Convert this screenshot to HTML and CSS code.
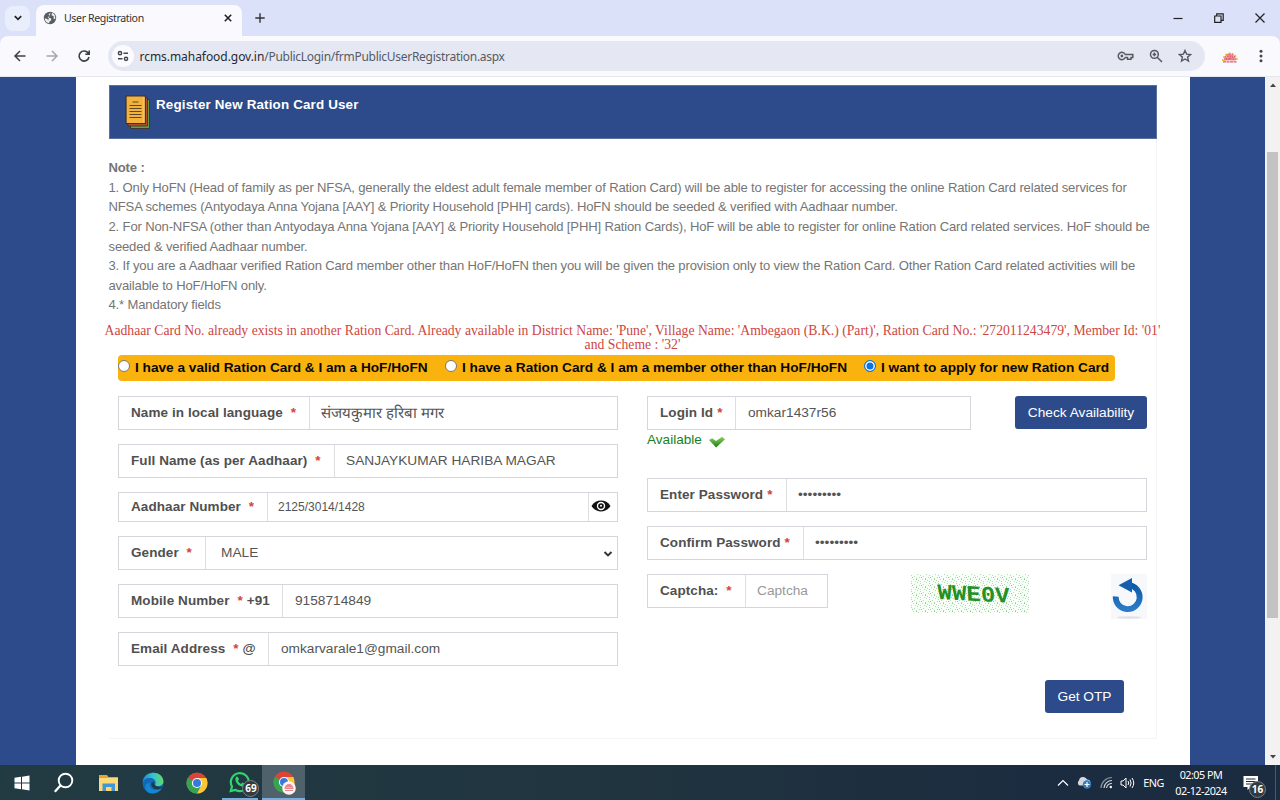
FILE: index.html
```html
<!DOCTYPE html>
<html lang="en">
<head>
<meta charset="utf-8">
<title>User Registration</title>
<link rel="stylesheet" href="styles.css">
</head>
<body>
<div class="tabstrip">
  <div class="tabsearch"><svg width="10" height="10" viewBox="0 0 10 10"><path d="M1.8 3.2 5 6.4 8.200 3.200" fill="none" stroke="#222" stroke-width="1.7"/></svg></div>
  <div class="tab">
    <svg class="globe" width="14" height="14" viewBox="0 0 14 14"><circle cx="7" cy="7" r="6.200" fill="#5a5e63"/><path d="M7.500 1.600 5.600 3.500 6.500 5 4.500 6.500 8 7.300 8.200 9.200 6.500 10.500 6 12.200C3.200 11.700 1.800 9.700 1.700 7.200L4.700 8.300 5 10M9 1.800 8.500 4.200 10.800 5.200 10.500 7.500 12.200 8.200C12.800 5.300 11.500 2.700 9 1.800Z" fill="#eef0f6"/></svg>
    <span class="tabtitle">User Registration</span>
    <svg width="10" height="10" viewBox="0 0 10 10"><path d="M1.800 1.800 8.200 8.200M8.200 1.800 1.800 8.200" stroke="#222" stroke-width="1.600"/></svg>
  </div>
  <svg class="plus" width="12" height="12" viewBox="0 0 12 12"><path d="M6 1.300V10.700M1.300 6H10.700" stroke="#333" stroke-width="1.400"/></svg>
  <div class="wincontrols">
    <svg width="12" height="12" viewBox="0 0 12 12"><path d="M1.500 6.500H10.500" stroke="#222" stroke-width="1.200"/></svg>
    <svg width="12" height="12" viewBox="0 0 12 12"><path d="M1.700 4h6.300v6.300H1.700zM3.700 4V1.800H10.200V8.300H8" fill="none" stroke="#222" stroke-width="1.200"/></svg>
    <svg width="12" height="12" viewBox="0 0 12 12"><path d="M1.500 1.500 10.500 10.500M10.500 1.500 1.500 10.500" stroke="#222" stroke-width="1.200"/></svg>
  </div>
</div>
<div class="toolbar">
  <svg width="14" height="14" viewBox="0 0 14 14"><path d="M12.500 7H2.300M7 2 2 7 7 12" fill="none" stroke="#3d4046" stroke-width="1.500"/></svg>
  <svg width="14" height="14" viewBox="0 0 14 14"><path d="M1.500 7H11.700M7 2 12 7 7 12" fill="none" stroke="#a4a7ad" stroke-width="1.500"/></svg>
  <svg width="14" height="14" viewBox="0 0 14 14"><path d="M11.400 4.500A5 5 0 1 0 12 8M12.200 1.500V5.200H8.300" fill="none" stroke="#3d4046" stroke-width="1.600"/></svg>
  <div class="omnibox">
    <div class="siteinfo"><svg width="14" height="14" viewBox="0 0 14 14"><g fill="none" stroke="#44484e" stroke-width="1.500"><circle cx="4" cy="4.200" r="1.600"/><path d="M7.500 4.200H12M2 9.800H6.500"/><circle cx="10" cy="9.800" r="1.600"/></g></svg></div>
    <span class="url">rcms.mahafood.gov.in<span class="path">/PublicLogin/frmPublicUserRegistration.aspx</span></span>
    <svg width="17" height="12" viewBox="0 0 17 12"><path d="M8.300 4.500A3.700 3.700 0 1 0 8.300 7.500H10.500V9.300H14V7.500H15.800V4.500Z" fill="none" stroke="#555960" stroke-width="1.500"/><circle cx="4.900" cy="6" r="1.400" fill="#555960"/></svg>
    <svg width="14" height="14" viewBox="0 0 14 14"><g fill="none" stroke="#555960" stroke-width="1.500"><circle cx="5.400" cy="5.400" r="3.900"/><path d="M8.200 8.200 13 13M3.600 5.400H7.200M5.400 3.600V7.200"/></g></svg>
    <svg width="14" height="14" viewBox="0 0 14 14"><path d="M7 1.500 8.600 5.100 12.600 5.500 9.600 8.100 10.500 12.100 7 10 3.500 12.100 4.400 8.100 1.400 5.500 5.400 5.100Z" fill="none" stroke="#555960" stroke-width="1.400"/></svg>
  </div>
  <svg class="sun" width="18" height="13" viewBox="0 0 18 13"><path d="M2.500 11A6.500 7 0 0 1 15.500 11" fill="none" stroke="#f4ba49" stroke-width="3" stroke-dasharray="1.800 1.200"/><path d="M4 10.500A5 6 0 0 1 14 10.500Z" fill="#ee9aa5"/><path d="M4 10C3 6 7 4 9 4S15 6 14 10M6 10C5 7 7 6 9 6S13 7 12 10M8 10V8H10V10" fill="none" stroke="#d84360" stroke-width="1" stroke-dasharray="2 .7"/><path d="M2 11.800H16" stroke="#e4576a" stroke-width="1.200" stroke-dasharray="3 .5"/></svg>
  <svg class="kebab" width="4" height="14" viewBox="0 0 4 14"><g fill="#44474c"><circle cx="2" cy="2.200" r="1.500"/><circle cx="2" cy="7" r="1.500"/><circle cx="2" cy="11.800" r="1.500"/></g></svg>
</div>
<div class="view">
  <div class="page">
    <div class="panel">
      <div class="banner">
        <svg width="26" height="35" viewBox="0 0 26 35"><path d="M5.500 4.500H24.500V33.500H5.500Z" fill="#6c9a45" stroke="#3b302a" stroke-width=".9"/><path d="M3 3H22.500V31H3Z" fill="#b84a2c" stroke="#3b302a" stroke-width=".8"/><path d="M1 1H20.300V28.500H1Z" fill="#f3b23e" stroke="#3b302a" stroke-width="1.200"/><path d="M19 2V28" stroke="#f8d183"/><path d="M7.500 7H13.500M4.500 10.500H16.500M4.500 13.500H16.500M4.500 16.500H16.500M4.500 19.500H16.500M4.500 22.500H16.500" stroke="#5d4826"/></svg>
        <h1>Register New Ration Card User</h1>
      </div>
      <div class="notes">
        <b>Note :</b>
        <p>1. Only HoFN (Head of family as per NFSA, generally the eldest adult female member of Ration Card) will be able to register for accessing the online Ration Card related services for</p>
        <p>NFSA schemes (Antyodaya Anna Yojana [AAY] &amp; Priority Household [PHH] cards). HoFN should be seeded &amp; verified with Aadhaar number.</p>
        <p>2. For Non-NFSA (other than Antyodaya Anna Yojana [AAY] &amp; Priority Household [PHH] Ration Cards), HoF will be able to register for online Ration Card related services. HoF should be</p>
        <p>seeded &amp; verified Aadhaar number.</p>
        <p>3. If you are a Aadhaar verified Ration Card member other than HoF/HoFN then you will be given the provision only to view the Ration Card. Other Ration Card related activities will be</p>
        <p>available to HoF/HoFN only.</p>
        <p>4.* Mandatory fields</p>
      </div>
      <div class="error">Aadhaar Card No. already exists in another Ration Card. Already available in District Name: 'Pune', Village Name: 'Ambegaon (B.K.) (Part)', Ration Card No.: '272011243479', Member Id: '01'<br>and Scheme : '32'</div>
      <div class="choices">
        <label><i class="radio"></i><span>I have a valid Ration Card &amp; I am a HoF/HoFN</span></label>
        <label><i class="radio"></i><span>I have a Ration Card &amp; I am a member other than HoF/HoFN</span></label>
        <label><i class="radio on"></i><span>I want to apply for new Ration Card</span></label>
      </div>
      <div class="form">
        <div class="col left">
          <div class="field"><div class="lab w192">Name in local language <em>*</em></div><div class="val hindi">संजयकुमार हरिबा मगर</div></div>
          <div class="field"><div class="lab w217">Full Name (as per Aadhaar) <em>*</em></div><div class="val name">SANJAYKUMAR HARIBA MAGAR</div></div>
          <div class="field short"><div class="lab w150">Aadhaar Number <em>*</em></div><div class="val small">2125/3014/1428</div>
            <div class="eye"><svg width="20" height="14" viewBox="0 0 20 14"><path d="M.5 7C5 -.3 15 -.3 19.500 7 15 14.300 5 14.300 .5 7Z" fill="#111"/><circle cx="10" cy="7" r="4.200" fill="#fff"/><circle cx="10" cy="7" r="2.800" fill="#111"/><circle cx="10" cy="6.700" r="1" fill="#fff"/></svg></div></div>
          <div class="field"><div class="lab w88">Gender <em>*</em></div><div class="val gender">MALE</div><svg class="caret" width="10" height="8" viewBox="0 0 10 8"><path d="M1.500 2 5 5.500 8.500 2" fill="none" stroke="#333" stroke-width="1.900"/></svg></div>
          <div class="field"><div class="lab w165">Mobile Number <em>*</em><span class="suf">+91</span></div><div class="val">9158714849</div></div>
          <div class="field"><div class="lab w151">Email Address <em>*</em><span class="suf">@</span></div><div class="val">omkarvarale1@gmail.com</div></div>
        </div>
        <div class="col right">
          <div class="line">
            <div class="field login"><div class="lab w89">Login Id<em>*</em></div><div class="val">omkar1437r56</div></div>
            <div class="btn check">Check Availability</div>
          </div>
          <div class="avail"><span>Available</span><svg width="18" height="13" viewBox="0 0 18 13"><defs><linearGradient id="g" x1="0" y1="0" x2="0" y2="1"><stop offset="0" stop-color="#8fd35e"/><stop offset="1" stop-color="#187a12"/></linearGradient></defs><path d="M1 5 4.200 3.300 8 6 14 1.800 17 4.200 8.200 12.500Z" fill="url(#g)"/></svg></div>
          <div class="field"><div class="lab w140">Enter Password<em>*</em></div><div class="val dots">•••••••••</div></div>
          <div class="field"><div class="lab w157">Confirm Password<em>*</em></div><div class="val dots">•••••••••</div></div>
          <div class="line last">
            <div class="field capt"><div class="lab w99">Captcha: <em>*</em></div><div class="val ph">Captcha</div></div>
            <svg class="captcha" width="118" height="39" viewBox="0 0 118 39"><defs><pattern id="p" width="9" height="8" patternUnits="userSpaceOnUse"><path d="M0 1h1v1h-1zM3 2h1v1h-1zM6 0h1v1h-1zM8 3h1v1h-1zM2 5h1v1h-1zM5 4h1v1h-1zM7 6h1v1h-1zM4 7h1v1h-1zM0 7h1v1h-1z" fill="#b4dcb4"/><path d="M1 3h1v1h-1zM5 5h1v1h-1z" fill="#92c892"/></pattern></defs><rect width="118" height="39" fill="#f8fff8"/><rect width="118" height="39" fill="url(#p)"/><text class="captxt" transform="translate(27 25) rotate(3) skewX(6)" textLength="72" lengthAdjust="spacingAndGlyphs">WWE0V</text></svg>
            <svg class="reload" width="36" height="46" viewBox="0 0 36 46"><defs><linearGradient id="r" x1="0" y1="0" x2="0" y2="1"><stop offset="0" stop-color="#0d59a8"/><stop offset="1" stop-color="#2b7ac8"/></linearGradient></defs><rect width="36" height="45" fill="#f7f8fc"/><ellipse cx="18" cy="43.500" rx="12" ry="1.300" fill="#e2e2e6"/><path d="M4.700 22.500A12 12 0 1 0 18 11.200" fill="none" stroke="url(#r)" stroke-width="5.800"/><path d="M7.500 11.300 21 4V18.500Z" fill="#1460ad"/></svg>
          </div>
        </div>
      </div>
      <div class="actions"><div class="btn otp">Get OTP</div></div>
    </div>
  </div>
  <div class="scrollbar">
    <svg width="8" height="6" viewBox="0 0 8 6"><path d="M1 5 4 1.500 7 5Z" fill="#444"/></svg>
    <div class="thumb"></div>
    <svg width="8" height="6" viewBox="0 0 8 6"><path d="M1 1 4 4.500 7 1Z" fill="#444"/></svg>
  </div>
</div>
<div class="taskbar">
  <div class="app"><svg width="16" height="16" viewBox="0 0 16 16"><path d="M.5 2.700 7 1.800V7.500H.5ZM8 1.700 15.500.6V7.500H8ZM.5 8.500H7V14.200L.5 13.300ZM8 8.500H15.500V15.400L8 14.300Z" fill="#fff"/></svg></div>
  <div class="app search"><svg width="22" height="22" viewBox="0 0 22 22"><circle cx="12.500" cy="8.500" r="6.800" fill="none" stroke="#fff" stroke-width="1.900"/><path d="M7.500 13.500 1.800 19.800" stroke="#fff" stroke-width="2.300"/></svg></div>
  <div class="app"><svg width="20" height="18" viewBox="0 0 20 18"><path d="M0 1H8L9.500 3H19V16H0Z" fill="#e2a928"/><path d="M0 4H19V17H0Z" fill="#fbd978"/><path d="M3.500 17V9.500H16V17H12.500V13H7V17Z" fill="#4196d5"/></svg></div>
  <div class="app"><svg width="22" height="22" viewBox="0 0 22 22"><defs><linearGradient id="e" x1="0" x2="1"><stop offset="0" stop-color="#168bd4"/><stop offset=".5" stop-color="#36c4cf"/><stop offset="1" stop-color="#65d866"/></linearGradient></defs><circle cx="11" cy="11" r="10.500" fill="#1269b8"/><path d="M.6 11C1-2.500 21-2.500 21.500 9.500 21.500 14 15 15.500 13 13 15 9 12 6 8 6 4 6 1.200 8 .6 11Z" fill="url(#e)"/><path d="M8 11C6 16 13 21 20 16 17 21 10 23 5.500 20 1.500 16 3 11 8 11Z" fill="#1587d0"/><path d="M12.500 9.500C11 12 13 15.500 20 14.500L20.500 15.500C14 20 8 15 9.500 11Z" fill="#21394a"/></svg></div>
  <div class="app"><svg width="22" height="22" viewBox="0 0 22 22"><circle cx="11" cy="11" r="10.500" fill="#dd4438"/><path d="M11 11 1.900 5.700A10.500 10.500 0 0 0 11 21.500L15.500 13.500Z" fill="#35a552"/><path d="M11 6H20.300A10.500 10.500 0 0 1 11 21.500L15.300 13.500Z" fill="#fcc934"/><circle cx="11" cy="11" r="5.100" fill="#fff"/><circle cx="11" cy="11" r="4" fill="#3978e0"/></svg></div>
  <div class="app wa"><svg width="22" height="22" viewBox="0 0 22 22"><path d="M1.800 20 3 15.500A9 9 0 1 1 6.500 19Z" fill="none" stroke="#2fd66b" stroke-width="2.200"/><path d="M7.500 5.500C5 8 7 12 9.500 14S15 16 16 13L13.500 11.500 12 13C10.500 12.300 9.500 11 9 9.800L10 8.500 9 6Z" fill="#2fd66b"/></svg><span class="badge b69">69</span></div>
  <div class="app active"><svg width="24" height="24" viewBox="0 0 24 24"><circle cx="11" cy="11" r="10.500" fill="#dd4438"/><path d="M11 11 1.900 5.700A10.500 10.500 0 0 0 11 21.500L15.500 13.500Z" fill="#35a552"/><path d="M11 6H20.300A10.500 10.500 0 0 1 11 21.500L15.300 13.500Z" fill="#fcc934"/><circle cx="11" cy="11" r="5.100" fill="#fff"/><circle cx="11" cy="11" r="4" fill="#3978e0"/><circle cx="16" cy="17" r="6.800" fill="#fff4f1"/><path d="M11.500 18A4.500 5 0 0 1 20.500 18Z" fill="#e9858f"/><path d="M12 19.500H20" stroke="#e9858f"/><path d="M13 16.500H19" stroke="#f4b0b4"/></svg></div>
  <div class="tray">
    <svg width="12" height="8" viewBox="0 0 12 8"><path d="M1 6.500 6 1.500 11 6.500" fill="none" stroke="#fff" stroke-width="1.200"/></svg>
    <svg class="cloud" width="16" height="13" viewBox="0 0 16 13"><path d="M3.500 9.500A3 3 0 0 1 3 4.500 4.200 4.200 0 0 1 11 3.500 3 3 0 0 1 12 9.500Z" fill="#d4d8dc"/><circle cx="11" cy="8.500" r="4.200" fill="#2c7fc5"/><path d="M11 6V11M8.500 8.500H13.500" stroke="#fff" stroke-width="1.200"/></svg>
    <svg class="wifi" width="13" height="13" viewBox="0 0 13 13"><g fill="none" stroke="#cdd3da" stroke-width="1.200"><path d="M1 12A11 11 0 0 1 12 1.500" opacity=".6"/><path d="M4 12A8 8 0 0 1 12 4.500M6.500 12A5.500 5.500 0 0 1 12 7.500"/></g><circle cx="10.800" cy="11" r="1.200" fill="#fff"/></svg>
    <svg class="vol" width="15" height="12" viewBox="0 0 15 12"><g fill="none" stroke="#fff" stroke-width="1"><path d="M1 4H3L6 1V11L3 8H1ZM8 4Q9.500 6 8 8M10 2.500Q12.200 6 10 9.500M12 1Q15.500 6 12 11"/></g></svg>
    <span class="eng">ENG</span>
    <div class="clock"><span>02:05 PM</span><span class="date">02-12-2024</span></div>
    <div class="note"><svg width="16" height="16" viewBox="0 0 16 16"><path d="M.5 1H15V12H8L4.500 15V12H.5Z" fill="#fff"/><path d="M3 4H12.500M3 6.500H12.500M3 9H9" stroke="#1c2b40" stroke-width="1"/></svg><span class="badge b16">16</span></div>
    <div class="peek"></div>
  </div>
</div>
</body>
</html>
```
FILE: styles.css
```css
* { box-sizing: border-box; }
body { margin: 0; width: 1280px; height: 800px; overflow: hidden; display: flex; flex-direction: column; font-family: "Liberation Sans", Arial, sans-serif; font-size: 13.1px; color: #555; background: #dae1f9; }
svg { display: block; flex: none; }
.tabstrip { height: 36px; background: #dae1f9; display: flex; align-items: center; padding-left: 5px; font-family: "Noto Sans", sans-serif; }
.tabsearch { width: 25px; height: 25px; border-radius: 8px; background: #e9eefc; display: flex; align-items: center; justify-content: center; }
.tab { margin-left: 6px; width: 206px; height: 31px; margin-top: 5px; background: #f9f9fe; border-radius: 8px 8px 0 0; display: flex; align-items: center; padding: 0 9px 5px 7px; }
.tabtitle { flex: 1; margin-left: 7px; font-size: 10.6px; color: #333; letter-spacing: -.38px; }
.plus { margin-left: 12px; }
.wincontrols { margin-left: auto; display: flex; gap: 29px; padding-right: 14.500px; }
.toolbar { height: 41px; background: #f9f9fe; display: flex; align-items: center; padding: 0 17px 0 12.500px; gap: 18px; border-bottom: 1px solid #e5e7ef; border-radius: 8px 8px 0 0; }
.omnibox { width: 1099px; height: 30px; margin-left: -1px; border-radius: 15px; background: #e5e8f3; display: flex; align-items: center; padding: 0 13px 0 4px; gap: 15px; }
.siteinfo { width: 22px; height: 22px; border-radius: 50%; background: #fafaff; display: flex; align-items: center; justify-content: center; }
.url { flex: 1; margin-left: -9px; font-family: "Noto Sans", sans-serif; font-size: 12px; color: #272a30; letter-spacing: -.05px; }
.path { color: #555b65; letter-spacing: -.28px; }
.sun { margin-left: -2px; }
.kebab { margin-left: 2px; }
.view { height: 688px; display: flex; background: #2d4b8a; }
.page { width: 1114px; margin-left: 76px; background: #fff; padding: 8px 33.500px 0 32.500px; }
.panel { height: 654px; border: solid #f4f4f6; border-width: 0 1px 1px 0; }
.banner { height: 54px; background: #2d4b8a; border: 1px solid #5a70a0; display: flex; padding: 9px 0 0 15.500px; margin-right: -1px; }
h1 { font-size: 13.400px; line-height: 20px; margin: 0 0 0 5px; color: #fff; letter-spacing: .16px; }
.notes { padding-top: 19.300px; line-height: 19.600px; color: #757575; white-space: nowrap; font-size: 13.07px; letter-spacing: -.155px; }
.notes b, .notes p { display: block; margin: 0; }
.error { font: 13.700px/13.600px "Liberation Serif", serif; color: #cf4540; text-align: center; white-space: nowrap; margin: 10px -6px 0 -5px; display: block; position: relative; top: -.6px; }
.choices { margin: 3px 0 0 9.500px; width: 997px; height: 26px; background: #fab20f; border-radius: 4px; display: flex; font-size: 13.650px; font-weight: bold; color: #080808; line-height: 25px; white-space: nowrap; }
.choices label { display: flex; padding-top: 0; }
.choices label:nth-child(1) { width: 327px; }
.choices label:nth-child(2) { width: 419px; }
.radio { width: 12px; height: 12px; border-radius: 50%; border: 1px solid #777; background: #fff; margin: 5px 5px 0 0; flex: none; }
.radio.on { border-color: #0b73ea; background: #0b73ea; box-shadow: inset 0 0 0 1.500px #fff; }
.form { display: flex; margin-top: 15px; padding-left: 9.500px; gap: 29px; height: 284px; }
.col { width: 500px; display: flex; flex-direction: column; gap: 14.200px; }
.field { height: 33.700px; display: flex; border: 1px solid #d3d6da; line-height: 32px; white-space: nowrap; position: relative; font-size: 13.700px; }
.short { height: 30px; line-height: 28px; }
.lab { border-right: 1px solid #dcdee2; padding-left: 12px; font-weight: bold; color: #505050; flex: none; font-size: 13.500px; letter-spacing: .08px; }
.lab em { font-style: normal; color: #d5423e; margin-left: 4px; }
.suf { margin-left: 4px; }
.val { flex: 1; padding-left: 12px; color: #555; }
.hindi { font-size: 15px; padding-left: 11px; }
.name { padding-left: 11px; }
.small { font-size: 12px; padding-left: 10px; }
.gender { padding-left: 15px; }
.ph { color: #999; padding-left: 11px; }
.dots { padding-left: 11px; }
.caret { margin: 13px 4px 0 0; }
.eye { width: 29px; border-left: 1px solid #dcdee2; padding: 6px 0 0 2px; }
.w192 { width: 191px; } .w217 { width: 216px; } .w150 { width: 149px; } .w88 { width: 87px; } .w165 { width: 164px; } .w151 { width: 150px; }
.w89 { width: 88px; } .w140 { width: 139px; } .w157 { width: 156px; } .w99 { width: 98px; }
.line { display: flex; }
.login { width: 324px; }
.capt { width: 181px; }
.btn { height: 33px; line-height: 33px; background: #2d4b8a; color: #fff; border-radius: 3px; text-align: center; font-size: 13.700px; }
.check { width: 132px; margin-left: auto; }
.avail { height: 34.200px; margin-top: -14.200px; display: flex; color: #188218; font-size: 13.600px; line-height: 19px; gap: 6px; }
.avail svg { margin-top: 5px; }
.captcha { margin-left: 82.500px; }
.captxt { font: bold 22px "Liberation Mono", monospace; fill: #249026; }
.reload { margin-left: auto; }
.actions { display: flex; justify-content: flex-end; padding-right: 31.500px; }
.otp { width: 79px; }
.scrollbar { width: 15px; margin-left: auto; background: #f2f2f2; display: flex; flex-direction: column; align-items: center; padding: 5px 0; }
.thumb { width: 11px; height: 466px; margin: 64px 0 auto; background: #c3c3c3; }
.taskbar { height: 35px; display: flex; align-items: stretch; background: linear-gradient(90deg, #223b43, #20343f 50%, #1b2b40 85%); color: #fff; font-family: "Noto Sans", sans-serif; }
.app { width: 43.700px; display: flex; align-items: center; justify-content: center; position: relative; }
.search { padding-right: 4px; }
.wa, .active { border-bottom: 2px solid #76aee0; }
.wa { width: 36px; margin: 0 4px; }
.active { width: 43px; margin-left: 0; background: #4f626b; padding: 2px 0 0 2px; }
.badge { position: absolute; width: 17px; height: 17px; border: 1px solid #798083; border-radius: 50%; background: #333b3e; font-size: 10px; line-height: 15px; text-align: center; font-weight: bold; color: #fff; }
.b69 { left: 20px; top: 15px; }
.tray { margin-left: auto; display: flex; align-items: center; font-size: 10.800px; }
.cloud { margin-left: 7px; } .wifi { margin-left: 8px; } .vol { margin-left: 7px; }
.eng { margin-left: 8px; letter-spacing: -.4px; }
.clock { width: 62px; margin-left: 6px; display: flex; flex-direction: column; text-align: center; line-height: 16px; letter-spacing: -.5px; }
.note { position: relative; margin: 0 16px 0 11px; }
.b16 { left: 6px; top: 6px; }
.peek { width: 5px; height: 35px; border-left: 1px solid #4d5a6b; }
```
